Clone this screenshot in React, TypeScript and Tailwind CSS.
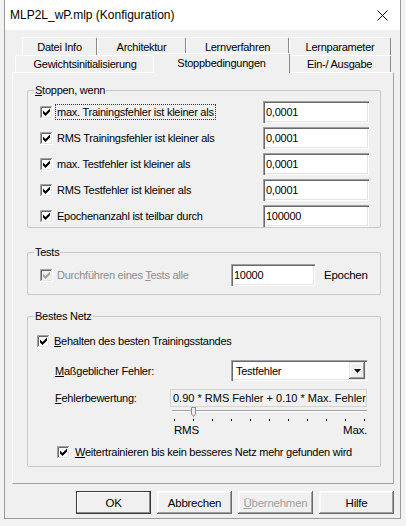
import React from "react";

function CheckBox({ disabled }: { disabled?: boolean }) {
  const mark = disabled ? "#a0a0a0" : "#000";
  return (
    <svg width="13" height="13" viewBox="0 0 13 13" className="shrink-0">
      <rect width="13" height="13" fill={disabled ? "#f0f0f0" : "#fff"} />
      <path d="M0.5 12V0.5H12" stroke="#a0a0a0" fill="none" />
      <path d="M1.5 11V1.5H11" stroke="#696969" fill="none" />
      <path d="M0 12.5H12.5V0" stroke="#fff" fill="none" />
      <path d="M1 11.5H11.5V1" stroke="#e3e3e3" fill="none" />
      <path d="M3 4.5L5.5 7L10 2.5V5.5L5.5 10L3 7.5Z" fill={mark} />
    </svg>
  );
}

function Edit({ value, w }: { value: string; w: string }) {
  return (
    <div
      className={`${w} h-[22px] shrink-0 bg-white flex items-center pl-[3px] shadow-[inset_1px_1px_0_#a0a0a0,inset_2px_2px_0_#696969,inset_-1px_-1px_0_#ffffff,inset_-2px_-2px_0_#e3e3e3]`}
    >
      {value}
    </div>
  );
}

function Tab({
  w,
  label,
  selected,
}: {
  w: string;
  label: string;
  selected?: boolean;
}) {
  if (selected) {
    return (
      <div
        className={`${w} relative z-10 -mx-[2px] -mt-[2px] h-[20px] bg-[#f0f0f0] border-l border-t border-white border-r border-r-[#8a8a8a] rounded-t-[2px] flex items-start justify-center pt-[2px]`}
      >
        {label}
      </div>
    );
  }
  return (
    <div
      className={`${w} h-full bg-[#f0f0f0] border-l border-t border-white border-r border-r-[#8a8a8a] rounded-t-[2px] flex items-center justify-center`}
    >
      {label}
    </div>
  );
}

function Button({
  label,
  def,
  disabled,
}: {
  label: React.ReactNode;
  def?: boolean;
  disabled?: boolean;
}) {
  return (
    <div
      className={`w-[75px] h-[23px] flex items-center justify-center bg-[#f0f0f0] ${
        disabled ? "text-[#a0a0a0]" : "text-black"
      } ${
        def
          ? "shadow-[inset_0_0_0_1px_#3a3a3a,inset_-2px_-2px_0_#8a8a8a,inset_2px_2px_0_#ffffff]"
          : "shadow-[inset_-1px_-1px_0_#696969,inset_1px_1px_0_#ffffff,inset_-2px_-2px_0_#a0a0a0,inset_2px_2px_0_#f8f8f8]"
      }`}
    >
      {label}
    </div>
  );
}

const rows = [
  { label: "max. Trainingsfehler ist kleiner als", value: "0,0001", focus: true },
  { label: "RMS Trainingsfehler ist kleiner als", value: "0,0001" },
  { label: "max. Testfehler ist kleiner als", value: "0,0001" },
  { label: "RMS Testfehler ist kleiner als", value: "0,0001" },
  { label: "Epochenanzahl ist teilbar durch", value: "100000" },
];

export default function App() {
  return (
    <div className="w-[406px] h-[526px] bg-[#f3f3f3] font-['Liberation_Sans',Arial,sans-serif] text-[11px] tracking-[-0.25px] text-black leading-[14px] overflow-hidden">
      <div className="ml-[4px] w-[397px] h-[519px] border-x border-b border-[#9a9a9a] bg-[#f0f0f0] flex flex-col">
        {/* title bar */}
        <div className="h-[30px] bg-white flex items-center justify-between pl-[5px] pr-[12px] text-[12px] tracking-normal">
          <span>MLP2L_wP.mlp (Konfiguration)</span>
          <svg width="11" height="11" viewBox="0 0 11 11">
            <path d="M0.5 0.5L10.5 10.5M10.5 0.5L0.5 10.5" stroke="#000" strokeWidth="1" />
          </svg>
        </div>

        {/* tabs */}
        <div className="mt-[7px] h-[18px] pl-[17px] flex">
          <Tab w="w-[75px]" label="Datei Info" />
          <Tab w="w-[89px]" label="Architektur" />
          <Tab w="w-[103px]" label="Lernverfahren" />
          <Tab w="w-[102px]" label="Lernparameter" />
        </div>
        <div className="h-[17px] pl-[10px] flex items-start">
          <Tab w="w-[140px]" label="Gewichtsinitialisierung" />
          <Tab w="w-[137px]" label="Stoppbedingungen" selected />
          <Tab w="w-[103px]" label="Ein-/ Ausgabe" />
        </div>

        {/* tab page */}
        <div className="ml-[7px] w-[382px] h-[412px] border-l border-t border-white border-r border-b border-r-[#a0a0a0] border-b-[#a0a0a0] pl-[14px] pr-[12px]">
          {/* Stoppen, wenn */}
          <fieldset className="mt-[10px] border border-[#c8c8c8] rounded-[2px] px-0">
            <legend className="ml-[6px] px-[1px] leading-[14px]">
              <u>S</u>toppen, wenn
            </legend>
            <div className="pt-[4px] pl-[12px] pr-[11px] flex flex-col gap-[4px]">
              {rows.map((r) => (
                <div key={r.label} className="h-[22px] flex items-center">
                  <CheckBox />
                  <span
                    className={`ml-[3px] px-[1px] ${
                      r.focus ? "outline outline-1 outline-dotted outline-[#333]" : ""
                    }`}
                  >
                    {r.label}
                  </span>
                  <div className="ml-auto">
                    <Edit value={r.value} w="w-[106px]" />
                  </div>
                </div>
              ))}
            </div>
          </fieldset>

          {/* Tests */}
          <fieldset className="mt-[17px] border border-[#c8c8c8] rounded-[2px] px-0">
            <legend className="ml-[6px] px-[1px] leading-[14px]">Tests</legend>
            <div className="pt-[5px] pb-[8px] pl-[12px] flex items-center">
              <div className="w-[191px] flex items-center text-[#8c8c8c]">
                <CheckBox disabled />
                <span className="ml-[4px]">
                  Durchführen eines <u>T</u>ests alle
                </span>
              </div>
              <Edit value="10000" w="w-[84px]" />
              <span className="ml-[9px] text-[11.5px]">Epochen</span>
            </div>
          </fieldset>

          {/* Bestes Netz */}
          <fieldset className="mt-[14px] border border-[#c8c8c8] rounded-[2px] px-0">
            <legend className="ml-[6px] px-[1px] leading-[14px]">Bestes Netz</legend>
            <div className="pt-[11px] pb-[7px] pr-[12px] flex flex-col">
              <div className="h-[14px] pl-[9px] flex items-center">
                <CheckBox />
                <span className="ml-[4px]">
                  <u>B</u>ehalten des besten Trainingsstandes
                </span>
              </div>

              <div className="mt-[12px] pl-[27px] flex items-center">
                <span className="w-[176px]">
                  <u>M</u>aßgeblicher Fehler:
                </span>
                <div className="w-[136px] h-[21px] bg-white flex items-center pl-[5px] pr-[2px] shadow-[inset_1px_1px_0_#a0a0a0,inset_2px_2px_0_#696969,inset_-1px_-1px_0_#ffffff,inset_-2px_-2px_0_#e3e3e3]">
                  <span className="flex-1">Testfehler</span>
                  <div className="w-[16px] h-[17px] bg-[#f0f0f0] flex items-center justify-center shadow-[inset_-1px_-1px_0_#696969,inset_1px_1px_0_#e3e3e3,inset_-2px_-2px_0_#a0a0a0,inset_2px_2px_0_#ffffff]">
                    <svg width="7" height="4" viewBox="0 0 7 4">
                      <path d="M0 0H7L3.5 4Z" fill="#000" />
                    </svg>
                  </div>
                </div>
              </div>

              <div className="mt-[8px] pl-[27px] flex items-center">
                <span className="w-[115px]">
                  <u>F</u>ehlerbewertung:
                </span>
                <div className="w-[197px] h-[18px] border border-[#d4d4d4] bg-[#f0f0f0] flex items-center pl-[2px] whitespace-nowrap tracking-[0px]">
                  0.90 * RMS Fehler + 0.10 * Max. Fehler
                </div>
              </div>

              <div className="ml-[144px] w-[195px] flex flex-col">
                <div className="relative mt-[3px] h-[2px] border-t border-[#a0a0a0] border-b border-b-white">
                  <svg
                    width="5"
                    height="10"
                    viewBox="0 0 5 10"
                    className="absolute left-[19px] -top-[4px]"
                  >
                    <path d="M0.5 0.5H4.5V7L2.5 9.5L0.5 7Z" fill="#f0f0f0" stroke="#8a8a8a" />
                  </svg>
                </div>
                <div className="mt-[7px] h-[2px] px-[2px] flex justify-between">
                  {Array.from({ length: 11 }).map((_, i) => (
                    <span key={i} className="w-[1px] h-[2px] bg-black" />
                  ))}
                </div>
                <div className="mt-[3px] h-[12px] flex justify-between leading-[12px] text-[11.5px]">
                  <span className="pl-[2px]">RMS</span>
                  <span>Max.</span>
                </div>
              </div>

              <div className="mt-[9px] h-[14px] pl-[29px] flex items-center">
                <CheckBox />
                <span className="ml-[5px]">
                  <u>W</u>eitertrainieren bis kein besseres Netz mehr gefunden wird
                </span>
              </div>
            </div>
          </fieldset>
        </div>

        {/* buttons */}
        <div className="mt-[7px] pr-[6px] flex justify-end gap-[6px] text-[11.5px]">
          <Button label="OK" def />
          <Button label="Abbrechen" />
          <Button
            label={
              <span>
                <u>Ü</u>bernehmen
              </span>
            }
            disabled
          />
          <Button label="Hilfe" />
        </div>
      </div>
    </div>
  );
}
